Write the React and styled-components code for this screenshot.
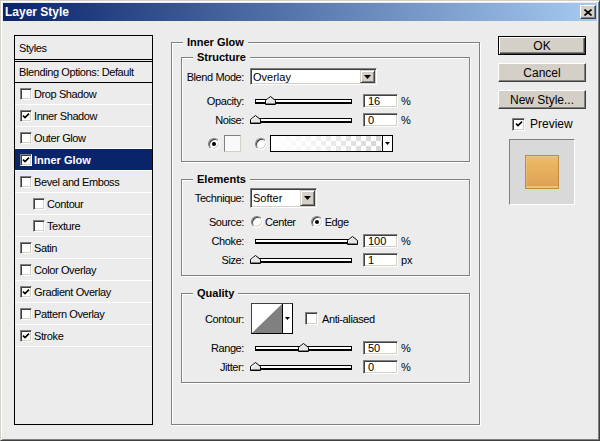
import React from 'react';
import styled, { createGlobalStyle } from 'styled-components';

const GlobalStyle = createGlobalStyle`
  html, body { margin: 0; padding: 0; background: #ECECEC; }
  body { font-family: "Liberation Sans", Arial, sans-serif; font-size: 11px; color: #000; }
  * { box-sizing: border-box; }
`;

const Window = styled.div`
  width: 600px;
  height: 441px;
  border: 1px solid;
  border-color: #D4D0C8 #404040 #404040 #D4D0C8;
  box-shadow: inset 1px 1px #fff, inset -1px -1px #808080;
  padding: 2px;
  background: #ECECEC;
  display: flex;
  flex-direction: column;
  overflow: hidden;
`;

const TitleBar = styled.div`
  height: 18px;
  flex: none;
  background: linear-gradient(to right, #0A246A, #A6CAF0);
  display: flex;
  align-items: center;
  justify-content: space-between;
  padding: 0 1px 0 2px;
`;

const TitleText = styled.span`
  color: #fff;
  font-weight: bold;
  font-size: 12px;
`;

const CloseButton = styled.div`
  width: 16px;
  height: 14px;
  background: #D4D0C8;
  border: 1px solid;
  border-color: #fff #404040 #404040 #fff;
  box-shadow: inset -1px -1px #808080;
  display: flex;
  align-items: center;
  justify-content: center;
`;

const Body = styled.div`
  flex: 1;
  display: flex;
  align-items: flex-start;
  padding: 14px 0 0 11px;
`;

/* ---------- Styles list ---------- */
const StylesPanel = styled.div`
  width: 139px;
  height: 390px;
  flex: none;
  border: 1px solid #000;
  display: flex;
  flex-direction: column;
`;

const PanelHeader = styled.div`
  height: 26px;
  border-bottom: 3px double #000;
  padding-left: 4px;
  display: flex;
  align-items: center;
  letter-spacing: -0.4px;
`;

const BlendRow = styled.div`
  height: 21px;
  border-bottom: 1px solid #000;
  padding-left: 4px;
  display: flex;
  align-items: center;
  letter-spacing: -0.4px;
`;

const StyleRow = styled.div`
  height: 22px;
  border-bottom: 1px solid #fff;
  display: flex;
  align-items: center;
  padding-left: ${p => (p.$indent ? 18 : 5)}px;
  background: ${p => (p.$selected ? '#0A246A' : 'transparent')};
  color: ${p => (p.$selected ? '#fff' : '#000')};
  font-weight: ${p => (p.$selected ? 'bold' : 'normal')};
  letter-spacing: ${p => (p.$selected ? '0px' : '-0.4px')};
`;

const CheckBoxBox = styled.span`
  width: ${p => p.$size || 12}px;
  height: ${p => p.$size || 12}px;
  flex: none;
  background: #fff;
  border: 1px solid;
  border-color: #808080 #fff #fff #808080;
  box-shadow: inset 1px 1px #404040, inset -1px -1px #D4D0C8;
  display: flex;
  align-items: center;
  justify-content: center;
  margin-left: ${p => p.$ml || 0}px;
  margin-right: ${p => (p.$mr == null ? 2 : p.$mr)}px;
`;

const CheckBox = ({ checked, ...rest }) => (
  <CheckBoxBox {...rest}>
    {checked && (
      <svg width="8" height="8" viewBox="0 0 8 8">
        <path d="M1 3.6 L3 5.6 L7 1.6" fill="none" stroke="#000" strokeWidth="1.6" />
      </svg>
    )}
  </CheckBoxBox>
);

/* ---------- Group boxes ---------- */
const Group = styled.div`
  position: relative;
  border: 1px solid #808080;
  box-shadow: inset 1px 1px #fff, 1px 1px #fff;
`;

const OuterGroup = styled(Group)`
  width: 309px;
  height: 383px;
  flex: none;
  margin: 7px 0 0 18px;
  padding: 14px 9px 0;
`;

const SubGroup = styled(Group)`
  margin-top: ${p => p.$mt || 0}px;
  padding-bottom: ${p => p.$pb}px;
  display: flex;
  flex-direction: column;
`;

const Legend = styled.span`
  position: absolute;
  top: -8px;
  left: 11px;
  padding: 0 4px;
  background: #ECECEC;
  font-weight: bold;
  line-height: 14px;
`;

const Row = styled.div`
  display: flex;
  align-items: center;
  height: ${p => p.$h}px;
  margin-top: ${p => p.$mt}px;
  letter-spacing: -0.4px;
`;

const Label = styled.span`
  width: 62px;
  flex: none;
  text-align: right;
`;

const Text = styled.span`
  margin-left: ${p => p.$ml || 0}px;
  flex: none;
`;

/* ---------- Controls ---------- */
const SliderBox = styled.div`
  position: relative;
  width: 97px;
  height: 14px;
  flex: none;
  margin-left: 11px;
  padding-top: 5px;
`;

const Track = styled.div`
  height: 5px;
  background: #fff;
  border: 1px solid #000;
  border-bottom-width: 2px;
`;

const Thumb = styled.svg`
  position: absolute;
  top: 2px;
`;

const Slider = ({ value }) => (
  <SliderBox>
    <Track />
    <Thumb width="11" height="9" viewBox="0 0 11 9" style={{ left: (value / 100) * 97 - 5.5 }}>
      <polygon points="0.5,8.5 0.5,4.5 5.5,0.5 10.5,4.5 10.5,8.5" fill="#E6E6E6" stroke="#000" />
      <polyline points="1.5,7.5 1.5,4.9 5.5,1.8" fill="none" stroke="#fff" />
      <line x1="1" y1="7.5" x2="10" y2="7.5" stroke="#808080" />
    </Thumb>
  </SliderBox>
);

const NumField = styled.span`
  width: 35px;
  height: 14px;
  flex: none;
  margin-left: 11px;
  background: #fff;
  border: 1px solid;
  border-color: #808080 #fff #fff #808080;
  box-shadow: inset 1px 1px #404040, inset -1px -1px #D4D0C8;
  padding-left: 4px;
  line-height: 12px;
  letter-spacing: 0;
`;

const Unit = styled.span`
  margin-left: 3px;
  letter-spacing: 0;
`;

const SelectBox = styled.div`
  width: ${p => p.$w}px;
  height: ${p => p.$h}px;
  flex: none;
  margin-left: 6px;
  background: #fff;
  border: 1px solid;
  border-color: #808080 #fff #fff #808080;
  box-shadow: inset 1px 1px #404040, inset -1px -1px #D4D0C8;
  padding: 1px;
  display: flex;
`;

const SelectText = styled.span`
  flex: 1;
  padding-left: 1px;
  display: flex;
  align-items: center;
  letter-spacing: 0;
`;

const DropButton = styled.span`
  width: 15px;
  flex: none;
  background: #D4D0C8;
  border: 1px solid;
  border-color: #D4D0C8 #404040 #404040 #D4D0C8;
  box-shadow: inset 1px 1px #fff, inset -1px -1px #808080;
  display: flex;
  align-items: center;
  justify-content: center;
`;

const DownTri = ({ w = 7, h = 4 }) => (
  <svg width={w} height={h} viewBox={`0 0 ${w} ${h}`}>
    <polygon points={`0,0 ${w},0 ${w / 2},${h}`} fill="#000" />
  </svg>
);

const Select = ({ value, w, h }) => (
  <SelectBox $w={w} $h={h}>
    <SelectText>{value}</SelectText>
    <DropButton>
      <DownTri />
    </DropButton>
  </SelectBox>
);

const RadioBox = styled.span`
  width: 12px;
  height: 12px;
  flex: none;
  border-radius: 50%;
  background: #fff;
  border: 1px solid;
  border-color: #808080 #fff #fff #808080;
  box-shadow: inset 1px 1px #404040, inset -1px -1px #D4D0C8;
  margin-left: ${p => p.$ml || 0}px;
  display: flex;
  align-items: center;
  justify-content: center;
  &::after {
    content: '';
    width: 4px;
    height: 4px;
    border-radius: 50%;
    background: #000;
    display: ${p => (p.$on ? 'block' : 'none')};
  }
`;

const ColorSwatch = styled.span`
  width: 17px;
  height: 17px;
  flex: none;
  margin-left: 4px;
  background: #F9F9F9;
  border: 1px solid;
  border-color: #808080 #D4D0C8 #D4D0C8 #808080;
`;

const GradientPicker = styled.div`
  width: 123px;
  height: 17px;
  flex: none;
  margin-left: 3px;
  border: 1px solid #000;
  display: flex;
`;

const GradientFill = styled.span`
  flex: 1;
  background:
    linear-gradient(to right, rgba(255,255,255,1) 0%, rgba(255,255,255,0.75) 40%, rgba(255,255,255,0.15) 100%),
    repeating-conic-gradient(#cdcdcd 0 25%, #fff 0 50%) 0 0 / 10px 10px;
`;

const PickerArrow = styled.span`
  width: 10px;
  flex: none;
  border-left: 1px solid #000;
  background: #fff;
  display: flex;
  align-items: center;
  justify-content: center;
`;

const ContourPicker = styled.div`
  width: 42px;
  height: 31px;
  flex: none;
  margin-left: 7px;
  border: 1px solid #000;
  border-color: #404040 #000 #000 #404040;
  display: flex;
  background: #fff;
`;

const ContourPreview = styled.svg`
  display: block;
  flex: none;
`;

/* ---------- Side column ---------- */
const SideColumn = styled.div`
  width: 88px;
  flex: none;
  margin: 1px 0 0 18px;
  display: flex;
  flex-direction: column;
  gap: 8px;
  font-size: 12px;
`;

const Button = styled.div`
  height: 19px;
  background: #D4D0C8;
  display: flex;
  align-items: center;
  justify-content: center;
  border: 1px solid;
  border-color: ${p => (p.$default ? '#000' : '#fff #404040 #404040 #fff')};
  box-shadow: ${p =>
    p.$default
      ? 'inset 1px 1px #fff, inset -1px -1px #404040, inset -2px -2px #808080'
      : 'inset -1px -1px #808080'};
`;

const PreviewRow = styled.div`
  height: 14px;
  display: flex;
  align-items: center;
  padding-left: 14px;
`;

const PreviewFrame = styled.div`
  width: 66px;
  height: 66px;
  margin-left: 11px;
  background: #D9D9D9;
  border: 1px solid;
  border-color: #808080 #fff #fff #808080;
  display: flex;
  align-items: center;
  justify-content: center;
`;

const PreviewChip = styled.div`
  width: 34px;
  height: 34px;
  background: linear-gradient(#EEBC68, #DBA153);
  border: 1px solid #C28A3D;
  box-shadow: inset 0 -2px #EDC27A, inset 1px 1px rgba(255,255,255,0.15);
`;

const styles = [
  { name: 'Drop Shadow', checked: false },
  { name: 'Inner Shadow', checked: true },
  { name: 'Outer Glow', checked: false },
  { name: 'Inner Glow', checked: true, selected: true },
  { name: 'Bevel and Emboss', checked: false },
  { name: 'Contour', checked: false, indent: true },
  { name: 'Texture', checked: false, indent: true },
  { name: 'Satin', checked: false },
  { name: 'Color Overlay', checked: false },
  { name: 'Gradient Overlay', checked: true },
  { name: 'Pattern Overlay', checked: false },
  { name: 'Stroke', checked: true },
];

export default function App() {
  return (
    <>
      <GlobalStyle />
      <Window>
        <TitleBar>
          <TitleText>Layer Style</TitleText>
          <CloseButton>
            <svg width="8" height="7" viewBox="0 0 8 7">
              <path d="M0.5 0.5 L7.5 6.5 M7.5 0.5 L0.5 6.5" stroke="#000" strokeWidth="1.6" />
            </svg>
          </CloseButton>
        </TitleBar>
        <Body>
          <StylesPanel>
            <PanelHeader>Styles</PanelHeader>
            <BlendRow>Blending Options: Default</BlendRow>
            {styles.map(s => (
              <StyleRow key={s.name} $indent={s.indent} $selected={s.selected}>
                <CheckBox checked={s.checked} />
                {s.name}
              </StyleRow>
            ))}
          </StylesPanel>

          <OuterGroup>
            <Legend>Inner Glow</Legend>

            <SubGroup $pb={9}>
              <Legend>Structure</Legend>
              <Row $h={17} $mt={10}>
                <Label>Blend Mode:</Label>
                <Select value="Overlay" w={127} h={17} />
              </Row>
              <Row $h={14} $mt={9}>
                <Label>Opacity:</Label>
                <Slider value={16} />
                <NumField>16</NumField>
                <Unit>%</Unit>
              </Row>
              <Row $h={14} $mt={5}>
                <Label>Noise:</Label>
                <Slider value={0} />
                <NumField>0</NumField>
                <Unit>%</Unit>
              </Row>
              <Row $h={17} $mt={8}>
                <RadioBox $ml={26} $on />
                <ColorSwatch />
                <RadioBox $ml={14} />
                <GradientPicker>
                  <GradientFill />
                  <PickerArrow>
                    <DownTri w={5} h={3} />
                  </PickerArrow>
                </GradientPicker>
              </Row>
            </SubGroup>

            <SubGroup $mt={17} $pb={8}>
              <Legend>Elements</Legend>
              <Row $h={20} $mt={8}>
                <Label>Technique:</Label>
                <Select value="Softer" w={67} h={20} />
              </Row>
              <Row $h={14} $mt={7}>
                <Label>Source:</Label>
                <RadioBox $ml={7} />
                <Text $ml={2}>Center</Text>
                <RadioBox $ml={15} $on />
                <Text $ml={2}>Edge</Text>
              </Row>
              <Row $h={14} $mt={5}>
                <Label>Choke:</Label>
                <Slider value={100} />
                <NumField>100</NumField>
                <Unit>%</Unit>
              </Row>
              <Row $h={14} $mt={5}>
                <Label>Size:</Label>
                <Slider value={0} />
                <NumField>1</NumField>
                <Unit>px</Unit>
              </Row>
            </SubGroup>

            <SubGroup $mt={17} $pb={8}>
              <Legend>Quality</Legend>
              <Row $h={31} $mt={9}>
                <Label>Contour:</Label>
                <ContourPicker>
                  <ContourPreview width="30" height="29" viewBox="0 0 30 29">
                    <rect width="30" height="29" fill="#fff" />
                    <polygon points="0,29 30,0 30,29" fill="#808080" />
                  </ContourPreview>
                  <PickerArrow>
                    <DownTri w={5} h={3} />
                  </PickerArrow>
                </ContourPicker>
                <CheckBox $ml={12} $mr={4} $size={13} />
                <Text>Anti-aliased</Text>
              </Row>
              <Row $h={14} $mt={7}>
                <Label>Range:</Label>
                <Slider value={50} />
                <NumField>50</NumField>
                <Unit>%</Unit>
              </Row>
              <Row $h={14} $mt={5}>
                <Label>Jitter:</Label>
                <Slider value={0} />
                <NumField>0</NumField>
                <Unit>%</Unit>
              </Row>
            </SubGroup>
          </OuterGroup>

          <SideColumn>
            <Button $default>OK</Button>
            <Button>Cancel</Button>
            <Button>New Style...</Button>
            <PreviewRow>
              <CheckBox checked $size={13} $mr={5} />
              Preview
            </PreviewRow>
            <PreviewFrame>
              <PreviewChip />
            </PreviewFrame>
          </SideColumn>
        </Body>
      </Window>
    </>
  );
}
